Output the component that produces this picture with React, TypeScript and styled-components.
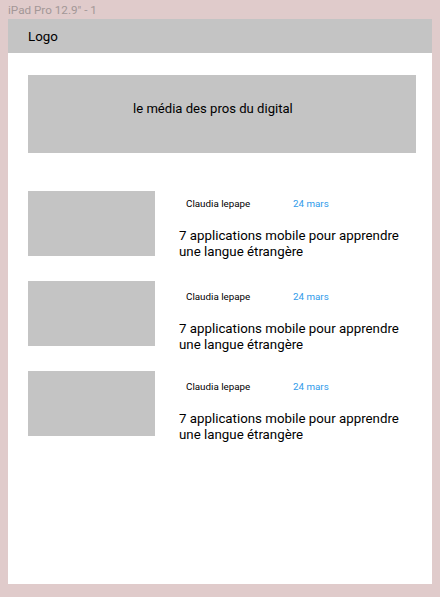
import React from "react";
import styled, { createGlobalStyle } from "styled-components";

const GlobalStyle = createGlobalStyle`
  html, body {
    margin: 0;
    padding: 0;
    background: #e0cbcb;
    font-family: Roboto, "Noto Sans", sans-serif;
  }
`;

const Page = styled.div`
  width: 440px;
  height: 597px;
  background: #e0cbcb;
  display: flex;
  flex-direction: column;
`;

const FrameLabel = styled.div`
  height: 19px;
  padding-left: 8px;
  font-family: Roboto, sans-serif;
  font-size: 11.7px;
  line-height: 21px;
  color: #a39797;
`;

const Frame = styled.div`
  margin-left: 8px;
  width: 424px;
  height: 565px;
  background: #ffffff;
  display: flex;
  flex-direction: column;
`;

const Header = styled.header`
  height: 34px;
  background: #c4c4c4;
  display: flex;
  align-items: center;
  padding-left: 20px;
  font-size: 13.3px;
  color: #000;
`;

const Hero = styled.section`
  margin: 22px 16px 0 20px;
  height: 78px;
  background: #c4c4c4;
  box-sizing: border-box;
  padding: 26px 0 0 105px;
  font-size: 13.1px;
  line-height: 16px;
  color: #000;
`;

const List = styled.div`
  margin: 38px 0 0 20px;
  display: flex;
  flex-direction: column;
  gap: 25px;
`;

const Row = styled.article`
  display: flex;
  align-items: flex-start;
  height: 65px;
`;

const Thumb = styled.div`
  width: 127px;
  height: 65px;
  background: #c4c4c4;
  flex-shrink: 0;
`;

const Info = styled.div<{ $top: number }>`
  padding: ${(p) => p.$top}px 0 0 24px;
  display: flex;
  flex-direction: column;
  gap: 18px;
`;

const Meta = styled.div`
  display: flex;
  padding-left: 7px;
  font-size: 9.8px;
  line-height: 12px;
`;

const Author = styled.span`
  width: 107px;
  color: #000;
`;

const DateText = styled.span`
  color: #2f9bea;
`;

const Title = styled.h2`
  margin: 0;
  font-weight: 400;
  font-size: 13.3px;
  line-height: 16px;
  color: #000;
`;

const articles = [{ top: 7 }, { top: 10 }, { top: 10 }];

export default function App() {
  return (
    <>
      <GlobalStyle />
      <Page>
        <FrameLabel>iPad Pro 12.9" - 1</FrameLabel>
        <Frame>
          <Header>Logo</Header>
          <Hero>le média des pros du digital</Hero>
          <List>
            {articles.map((a, i) => (
              <Row key={i}>
                <Thumb />
                <Info $top={a.top}>
                  <Meta>
                    <Author>Claudia lepape</Author>
                    <DateText>24 mars</DateText>
                  </Meta>
                  <Title>
                    7 applications mobile pour apprendre
                    <br />
                    une langue étrangère
                  </Title>
                </Info>
              </Row>
            ))}
          </List>
        </Frame>
      </Page>
    </>
  );
}
